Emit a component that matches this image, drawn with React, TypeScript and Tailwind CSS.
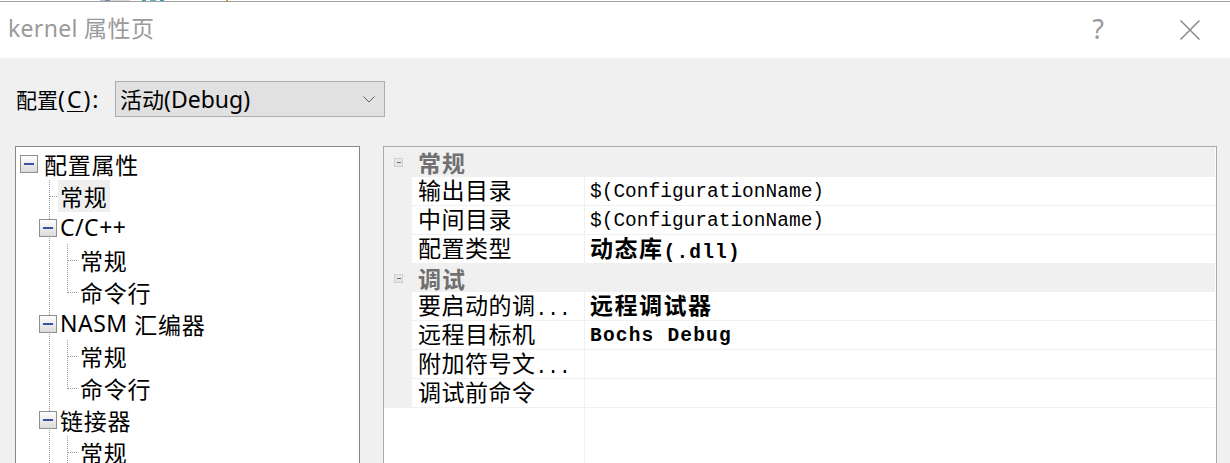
import React from "react";

const CJK_RE = /([\u2E80-\u9FFF\uF900-\uFAFF\uFF00-\uFFEF]+)/;
const isCJK = (s: string) => /[\u2E80-\u9FFF\uF900-\uFAFF\uFF00-\uFFEF]/.test(s);

// SimSun-like text: CJK at 23px, latin in mono at 19.5px, sharing a baseline
function Sim({ text, bold }: { text: string; bold?: boolean }) {
  const parts = text.split(CJK_RE).filter(Boolean);
  return (
    <span className={"whitespace-pre leading-[23px] " + (bold ? "font-bold" : "font-normal")}>
      {parts.map((p, i) =>
        isCJK(p) ? (
          <span
            key={i}
            className={
              "font-['Noto_Sans_CJK_SC',sans-serif] text-[23px] align-[1px] " +
              (bold ? "tracking-[1.5px]" : "tracking-[0.5px]")
            }
          >
            {p}
          </span>
        ) : (
          <span
            key={i}
            className={
              "font-['Liberation_Mono',monospace] text-[19.5px] " +
              (bold ? "tracking-[1.2px]" : "tracking-[0px]")
            }
          >
            {p}
          </span>
        )
      )}
    </span>
  );
}

function Ui({ text }: { text: string }) {
  const parts = text.split(CJK_RE).filter(Boolean);
  return (
    <span className="whitespace-pre leading-none">
      {parts.map((p, i) =>
        isCJK(p) ? (
          <span key={i} className="font-['Noto_Sans_CJK_SC',sans-serif] text-[23px] tracking-[0.5px]">
            {p}
          </span>
        ) : (
          <span key={i} className="font-['Noto_Sans','Noto_Sans_CJK_SC',sans-serif] text-[23px] tracking-[0.3px]">
            {p}
          </span>
        )
      )}
    </span>
  );
}

type Kind = "root" | "leaf1" | "node1" | "leaf2" | "leaf2last";

function ExpBox({ x, id }: { x: number; id: string }) {
  return (
    <g>
      <defs>
        <linearGradient id={id} x1="0" y1="0" x2="0" y2="1">
          <stop offset="0" stopColor="#ffffff" />
          <stop offset="1" stopColor="#d9d9d9" />
        </linearGradient>
      </defs>
      <rect x={x + 0.5} y={7.5} width={17} height={17} fill={`url(#${id})`} stroke="#8f8f8f" />
      <rect x={x + 4} y={15} width={10} height={2} fill="#3d4f9e" />
    </g>
  );
}

function Gutter({ kind, id }: { kind: Kind; id: string }) {
  const w = kind === "root" ? 26 : kind === "leaf1" || kind === "node1" ? 42 : 62;
  const dot = { stroke: "#9a9a9a", strokeWidth: 1, strokeDasharray: "1 1" };
  return (
    <svg width={w} height={32} className="shrink-0 block">
      {kind !== "root" && <line x1={33.5} y1={0} x2={33.5} y2={32} {...dot} />}
      {kind === "root" && <ExpBox x={4} id={id} />}
      {kind === "leaf1" && <line x1={34} y1={16.5} x2={42} y2={16.5} {...dot} />}
      {kind === "node1" && <ExpBox x={23} id={id} />}
      {(kind === "leaf2" || kind === "leaf2last") && (
        <>
          <line x1={51.5} y1={0} x2={51.5} y2={kind === "leaf2" ? 32 : 17} {...dot} />
          <line x1={52} y1={16.5} x2={62} y2={16.5} {...dot} />
        </>
      )}
    </svg>
  );
}

const tree: { kind: Kind; label: string; sel?: boolean }[] = [
  { kind: "root", label: "配置属性" },
  { kind: "leaf1", label: "常规", sel: true },
  { kind: "node1", label: "C/C++" },
  { kind: "leaf2", label: "常规" },
  { kind: "leaf2last", label: "命令行" },
  { kind: "node1", label: "NASM 汇编器" },
  { kind: "leaf2", label: "常规" },
  { kind: "leaf2last", label: "命令行" },
  { kind: "node1", label: "链接器" },
  { kind: "leaf2", label: "常规" },
];

function TreeLabel({ text }: { text: string }) {
  const parts = text.split(CJK_RE).filter(Boolean);
  return (
    <span className="inline-flex items-center whitespace-pre text-black leading-none">
      {parts.map((p, i) =>
        isCJK(p) ? (
          <span key={i} className="font-['Noto_Sans_CJK_SC',sans-serif] text-[23px] leading-[24px] tracking-[0.75px]">
            {p}
          </span>
        ) : (
          <span key={i} className="font-['Noto_Sans',sans-serif] text-[23px] leading-[24px] tracking-[0.5px] pb-[2px]">
            {p}
          </span>
        )
      )}
    </span>
  );
}

function SectionIcon() {
  return (
    <svg width={9} height={9} className="block">
      <rect x={0.5} y={0.5} width={8} height={8} fill="#e6e6e6" stroke="#d0d0d0" />
      <rect x={3} y={4} width={4} height={1} fill="#6a6a6a" />
    </svg>
  );
}

function Header({ text, h }: { text: string; h: string }) {
  return (
    <div className={"flex items-center bg-[#f0f0f0] shrink-0 " + h}>
      <div className="w-[28px] flex justify-center">
        <SectionIcon />
      </div>
      <div className="pl-[6px] text-[#707070] leading-none">
        <span className="font-['Noto_Sans_CJK_SC',sans-serif] text-[23px] font-bold tracking-[1px]">{text}</span>
      </div>
    </div>
  );
}

function PropRow({ name, value, bold }: { name: string; value?: string; bold?: boolean }) {
  return (
    <div className="flex h-[29px] shrink-0">
      <div className="w-[28px] bg-[#f0f0f0]" />
      <div className="flex-1 flex border-b border-[#f0f0f0]">
        <div className="w-[173px] border-r border-[#f0f0f0] flex items-center pl-[6px] pt-[2px] text-black overflow-hidden">
          <Sim text={name} />
        </div>
        <div className="flex-1 flex items-center pl-[5px] pt-[2px] text-black">
          {value && <Sim text={value} bold={bold} />}
        </div>
      </div>
    </div>
  );
}

export default function App() {
  return (
    <div className="w-[1230px] h-[463px] overflow-hidden bg-[#f0f0f0] flex flex-col">
      {/* background window remnant */}
      <div className="h-[1px] bg-white flex shrink-0">
        <div className="w-[100px]" />
        <div className="w-[5px] bg-[#b8c4d8]" />
        <div className="w-[5px] bg-[#6f86aa]" />
        <div className="w-[20px] bg-[#d8d8d8]" />
        <div className="w-[12px]" />
        <div className="w-[4px] bg-[#3aa0b0]" />
        <div className="w-[4px]" />
        <div className="w-[6px] bg-[#5fb3c0]" />
        <div className="w-[4px]" />
        <div className="w-[4px] bg-[#3aa0b0]" />
        <div className="w-[62px]" />
        <div className="w-[2px] bg-[#e08a30]" />
      </div>
      <div className="h-[1px] bg-[#a0a0a0] shrink-0" />

      {/* title bar */}
      <div className="h-[56px] shrink-0 bg-white flex items-center justify-between pl-[8px] pr-[30px]">
        <div className="text-[#9a9a9a] pb-[2px]">
          <Ui text="kernel 属性页" />
        </div>
        <div className="flex items-center gap-[76px]">
          <span className="font-['Noto_Sans',sans-serif] text-[27px] text-[#999] leading-[32px] pb-[2px]">?</span>
          <svg width={20} height={20} className="block">
            <line x1={0.5} y1={0.5} x2={19.5} y2={19.5} stroke="#8a8a8a" strokeWidth={1.5} />
            <line x1={19.5} y1={0.5} x2={0.5} y2={19.5} stroke="#8a8a8a" strokeWidth={1.5} />
          </svg>
        </div>
      </div>

      {/* body */}
      <div className="flex-1 flex flex-col pl-[15px] min-h-0">
        <div className="flex items-center mt-[23px] h-[36px] shrink-0">
          <div className="w-[100px] pl-[1px] text-black leading-none">
            <span className="font-['Noto_Sans_CJK_SC',sans-serif] text-[21px]">配置</span>
            <span className="font-['Noto_Sans',sans-serif] text-[23px] tracking-[2px]">
              (<span className="underline underline-offset-[3px] decoration-1">C</span>):
            </span>
          </div>
          <div className="w-[270px] h-[36px] bg-[#e1e1e1] border border-[#adadad] flex items-center justify-between pl-[4px] pr-[9px]">
            <span className="text-black leading-none">
              <span className="font-['Noto_Sans_CJK_SC',sans-serif] text-[22px]">活动</span>
              <span className="font-['Noto_Sans',sans-serif] text-[23px]">(Debug)</span>
            </span>
            <svg width={12} height={7} className="block">
              <polyline points="0.5,0.5 6,6 11.5,0.5" fill="none" stroke="#606060" strokeWidth={1} />
            </svg>
          </div>
        </div>

        <div className="flex mt-[29px] h-[340px] shrink-0 gap-[23px]">
          {/* tree */}
          <div className="w-[345px] border border-[#828790] bg-white pt-[1px] overflow-hidden">
            {tree.map((n, i) => (
              <div key={i} className="flex h-[32px] items-stretch">
                <Gutter kind={n.kind} id={`g${i}`} />
                <div className={"flex items-center px-[2px] " + (n.sel ? "bg-[#efefef]" : "")}>
                  <TreeLabel text={n.label} />
                </div>
              </div>
            ))}
          </div>

          {/* property grid */}
          <div className="w-[834px] border border-[#a9a9b1] bg-white pr-px flex flex-col overflow-hidden">
            <Header text="常规" h="h-[30px]" />
            <PropRow name="输出目录" value="$(ConfigurationName)" />
            <PropRow name="中间目录" value="$(ConfigurationName)" />
            <PropRow name="配置类型" value="动态库(.dll)" bold />
            <Header text="调试" h="h-[28px]" />
            <PropRow name="要启动的调..." value="远程调试器" bold />
            <PropRow name="远程目标机" value="Bochs Debug" bold />
            <PropRow name="附加符号文..." />
            <PropRow name="调试前命令" />
            <div className="flex-1 flex">
              <div className="w-[201px] border-r border-[#f0f0f0]" />
              <div className="flex-1" />
            </div>
          </div>
        </div>
      </div>
    </div>
  );
}
